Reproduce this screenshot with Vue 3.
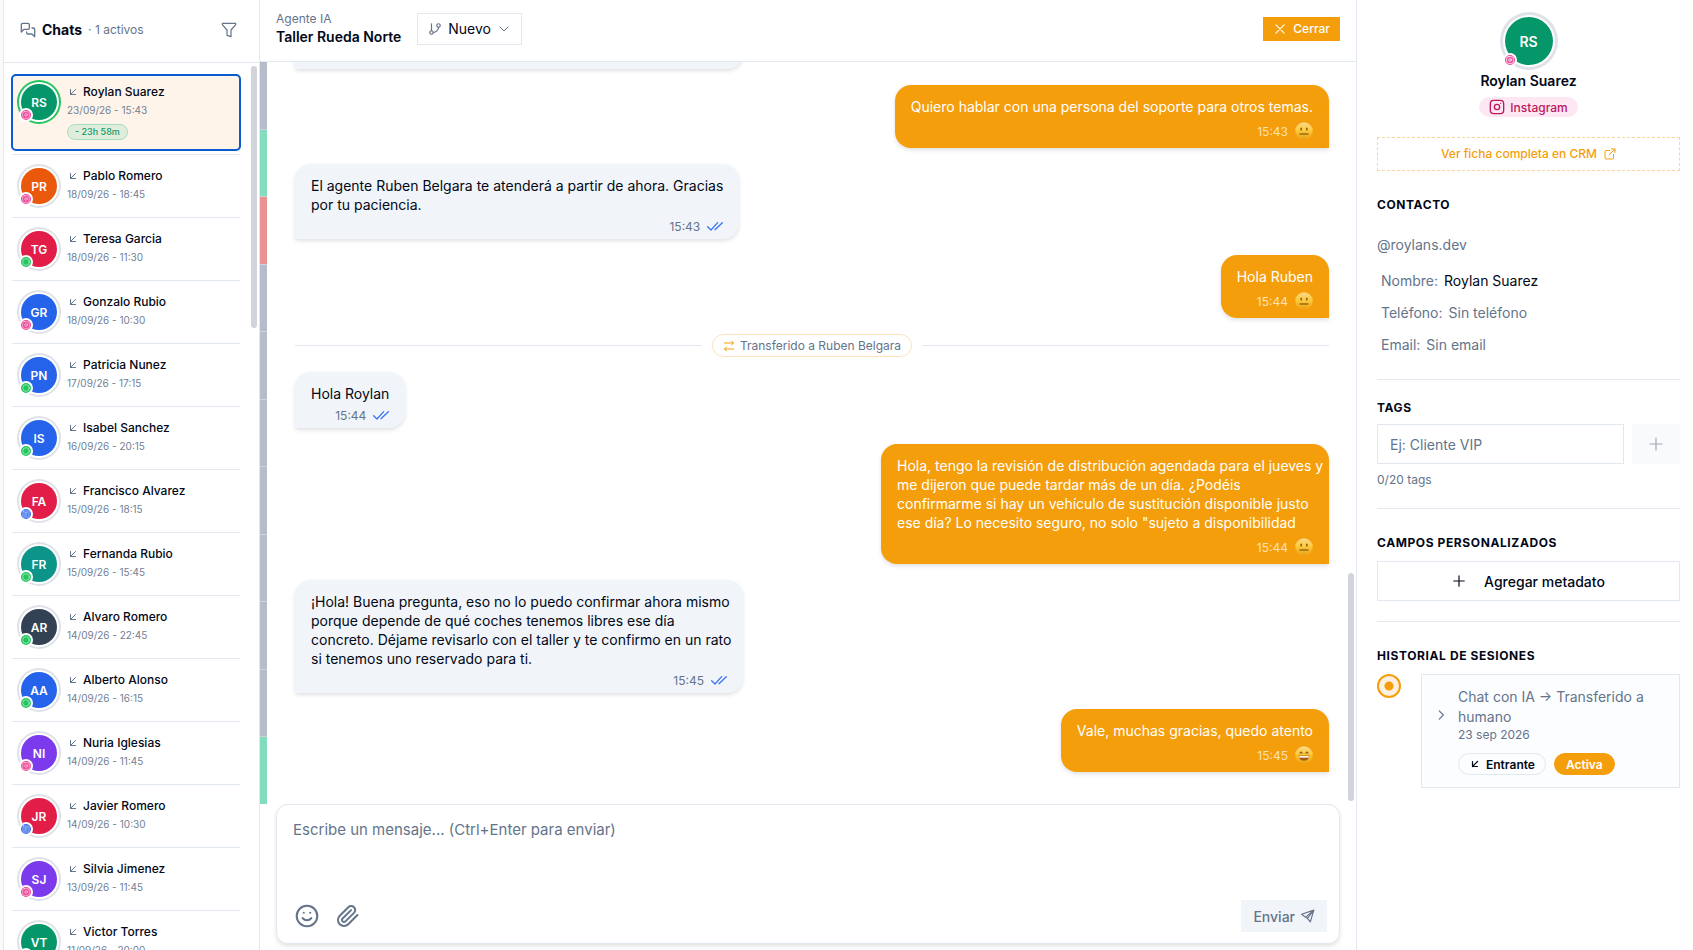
<template>
  <div class="app">
    <aside class="chats">
      <header class="chats-header">
        <Icon name="messages" :size="16" />
        <h1>Chats</h1>
        <span class="count">· 1 activos</span>
        <button type="button" class="icon-btn filter" aria-label="Filtrar">
          <Icon name="filter" :size="16" :stroke="1.8" />
        </button>
      </header>

      <ul class="chat-list">
        <li v-for="chat in chats" :key="chat.name">
          <button
            type="button"
            class="chat"
            :class="{ active: chat.name === selected }"
            @click="selected = chat.name"
          >
            <span class="avatar" :class="[chat.color, { online: chat.left }]">
              {{ chat.initials }}
              <span class="channel" :class="chat.channel">
                <Icon :name="chat.channel" :size="8" :stroke="2" />
              </span>
            </span>
            <span class="chat-info">
              <span class="chat-name">
                <Icon name="arrowIn" :size="12" />
                {{ chat.name }}
              </span>
              <span class="chat-date">{{ chat.date }}</span>
              <span v-if="chat.left" class="time-left">- {{ chat.left }}</span>
            </span>
          </button>
        </li>
      </ul>
      <div class="scrollbar list-bar"></div>
    </aside>

    <main class="conversation">
      <header class="conv-header">
        <div class="agent">
          <span>Agente IA</span>
          <strong>Taller Rueda Norte</strong>
        </div>
        <label class="status">
          <Icon name="branch" :size="14" />
          <select v-model="status" aria-label="Estado">
            <option>Nuevo</option>
          </select>
          <Icon name="chevronDown" :size="12" />
        </label>
        <button type="button" class="close-btn">
          <Icon name="close" :size="14" />
          Cerrar
        </button>
      </header>

      <div class="conv-body">
        <div class="mood">
          <span v-for="(m, i) in moods" :key="i" :class="m"></span>
        </div>

        <div class="messages">
          <div class="bubble agent-msg previous"></div>
          <template v-for="(msg, i) in messages" :key="i">
            <div v-if="msg.type === 'transfer'" class="transfer">
              <span class="transfer-pill">
                <Icon name="swap" :size="12" />
                {{ msg.text }}
              </span>
            </div>
            <div v-else class="bubble" :class="msg.type === 'agent' ? 'agent-msg' : 'client-msg'">
              <p>{{ msg.text }}</p>
              <div class="meta">
                <time>{{ msg.time }}</time>
                <Icon v-if="msg.type === 'agent'" name="checks" :size="16" />
                <svg v-else class="emoji" viewBox="0 0 18 18" width="18" height="18">
                  <defs>
                    <linearGradient :id="'face' + i" x1="0" y1="0" x2="0" y2="1">
                      <stop offset="0" stop-color="#fcd890" />
                      <stop offset="0.45" stop-color="#fccb3c" />
                      <stop offset="1" stop-color="#ee9f14" />
                    </linearGradient>
                  </defs>
                  <circle cx="9" cy="9" r="8.7" :fill="`url(#face${i})`" />
                  <template v-if="msg.mood === 'happy'">
                    <path d="M4.6 7.6 6.1 6l1.5 1.6M10.4 7.6 11.9 6l1.5 1.6" fill="none" stroke="#8d5a12" stroke-width="1.1" />
                    <path d="M3.6 9.6h10.8c0 3.2-2.3 5.2-5.4 5.2s-5.4-2-5.4-5.2z" fill="#a65a18" />
                    <path d="M4.1 10h9.8v1.7H4.1z" fill="#fff3dc" />
                  </template>
                  <template v-else>
                    <ellipse cx="6.2" cy="7" rx="0.9" ry="1.5" fill="#8d5a12" />
                    <ellipse cx="11.8" cy="7" rx="0.9" ry="1.5" fill="#8d5a12" />
                    <path d="M4.6 12h8.8" stroke="#8d5a12" stroke-width="1.3" />
                  </template>
                </svg>
              </div>
            </div>
          </template>
        </div>
        <div class="scrollbar conv-bar"></div>
      </div>

      <form class="composer" @submit.prevent="draft = ''">
        <textarea
          v-model="draft"
          aria-label="Mensaje"
          placeholder="Escribe un mensaje... (Ctrl+Enter para enviar)"
        ></textarea>
        <div class="composer-tools">
          <button type="button" class="icon-btn" aria-label="Emoji">
            <Icon name="smile" :size="26" :stroke="1.9" />
          </button>
          <button type="button" class="icon-btn" aria-label="Adjuntar">
            <Icon name="clip" :size="24" />
          </button>
          <button type="submit" class="send-btn">
            Enviar
            <Icon name="send" :size="14" />
          </button>
        </div>
      </form>
    </main>

    <aside class="details">
      <div class="profile">
        <span class="avatar large green">
          RS
          <span class="channel instagram">
            <Icon name="instagram" :size="8" :stroke="3" />
          </span>
        </span>
        <h2>Roylan Suarez</h2>
        <span class="network">
          <Icon name="instagram" :size="16" />
          Instagram
        </span>
      </div>

      <a href="#" class="crm-link">
        Ver ficha completa en CRM
        <Icon name="external" :size="12" />
      </a>

      <section class="contact">
        <h3>CONTACTO</h3>
        <p class="handle">@roylans.dev</p>
        <dl>
          <div><dt>Nombre:</dt><dd class="filled">Roylan Suarez</dd></div>
          <div><dt>Teléfono:</dt><dd>Sin teléfono</dd></div>
          <div><dt>Email:</dt><dd>Sin email</dd></div>
        </dl>
      </section>

      <section class="tags">
        <h3><label for="tag">TAGS</label></h3>
        <div class="tag-row">
          <input id="tag" v-model="tag" type="text" placeholder="Ej: Cliente VIP" />
          <button type="button" disabled aria-label="Agregar tag">
            <Icon name="plus" :size="16" :stroke="1.8" />
          </button>
        </div>
        <small>0/20 tags</small>
      </section>

      <section class="fields">
        <h3>CAMPOS PERSONALIZADOS</h3>
        <button type="button" class="add-field">
          <Icon name="plus" :size="14" :stroke="2" />
          Agregar metadato
        </button>
      </section>

      <section class="history">
        <h3>HISTORIAL DE SESIONES</h3>
        <div class="session">
          <span class="dot"></span>
          <article class="card">
            <div class="card-head">
              <Icon name="chevronRight" :size="14" />
              <div>
                <p>Chat con IA → Transferido a humano</p>
                <time>23 sep 2026</time>
              </div>
            </div>
            <div class="badges">
              <span class="badge"><Icon name="arrowIn" :size="12" :stroke="2.4" />Entrante</span>
              <span class="badge solid">Activa</span>
            </div>
          </article>
        </div>
      </section>
    </aside>
  </div>
</template>

<script setup>
import { h, ref } from "vue";

const icons = {
  messages:
    '<path d="M14 9a2 2 0 0 1-2 2H6l-4 4V4a2 2 0 0 1 2-2h8a2 2 0 0 1 2 2z"/><path d="M18 9h2a2 2 0 0 1 2 2v11l-4-4h-6a2 2 0 0 1-2-2v-1"/>',
  filter: '<path d="M22 2H2v2l7 8v8l6 2V12l7-8z"/>',
  arrowIn: '<path d="M17 7 7 17M17 17H7V7"/>',
  branch:
    '<path d="M6 3v12"/><circle cx="18" cy="6" r="3"/><circle cx="6" cy="18" r="3"/><path d="M18 9a9 9 0 0 1-9 9"/>',
  chevronDown: '<path d="m4 8 8 8 8-8"/>',
  chevronRight: '<path d="m9 19 7-7-7-7"/>',
  close: '<path d="M19 5 5 19M5 5l14 14"/>',
  checks: '<path d="M1 13l5 5L16 7M12 17.500 23 7"/>',
  swap: '<path d="m17 2 4 4-4 4M3 6h18M7 22l-4-4 4-4M21 18H3"/>',
  smile:
    '<circle cx="12" cy="12" r="9.500"/><path d="M8 14s1.500 2 4 2 4-2 4-2M9 9h.01M15 9h.01"/>',
  clip: '<path d="m21.440 11.050-9.190 9.190a6 6 0 0 1-8.490-8.490l8.570-8.570A4 4 0 1 1 18 8.840l-8.590 8.570a2 2 0 0 1-2.830-2.830l8.490-8.480"/>',
  send: '<path d="M22 2 1 9l7 5 14-12-6 20-5-6 11-14M8 14l3 2"/>',
  external:
    '<path d="M15 2h7v7M10 14 22 2M19 13v7a2 2 0 0 1-2 2H4a2 2 0 0 1-2-2V7a2 2 0 0 1 2-2h7"/>',
  plus: '<path d="M3 12h18M12 3v18"/>',
  instagram:
    '<rect x="2" y="2" width="20" height="20" rx="5"/><circle cx="12" cy="12" r="4"/><path d="M17.500 6.500h.01"/>',
  whatsapp: '<circle cx="12" cy="12" r="10"/>',
  web: '<rect x="3" y="3" width="18" height="18" rx="2"/><path d="M8 8h8M8 12h8M8 16h5"/>',
};

const Icon = (props) =>
  h("svg", {
    class: "icon",
    width: props.size,
    height: props.size,
    viewBox: "0 0 24 24",
    fill: "none",
    stroke: "currentColor",
    "stroke-width": props.stroke || 2,
    "stroke-linecap": "round",
    "stroke-linejoin": "round",
    "aria-hidden": "true",
    innerHTML: icons[props.name],
  });
Icon.props = ["name", "size", "stroke"];

const selected = ref("Roylan Suarez");
const status = ref("Nuevo");
const draft = ref("");
const tag = ref("");

const chats = [
  { initials: "RS", name: "Roylan Suarez", date: "23/09/26 - 15:43", color: "green", channel: "instagram", left: "23h 58m" },
  { initials: "PR", name: "Pablo Romero", date: "18/09/26 - 18:45", color: "orange", channel: "instagram" },
  { initials: "TG", name: "Teresa Garcia", date: "18/09/26 - 11:30", color: "red", channel: "whatsapp" },
  { initials: "GR", name: "Gonzalo Rubio", date: "18/09/26 - 10:30", color: "blue", channel: "instagram" },
  { initials: "PN", name: "Patricia Nunez", date: "17/09/26 - 17:15", color: "blue", channel: "whatsapp" },
  { initials: "IS", name: "Isabel Sanchez", date: "16/09/26 - 20:15", color: "blue", channel: "whatsapp" },
  { initials: "FA", name: "Francisco Alvarez", date: "15/09/26 - 18:15", color: "red", channel: "web" },
  { initials: "FR", name: "Fernanda Rubio", date: "15/09/26 - 15:45", color: "teal", channel: "whatsapp" },
  { initials: "AR", name: "Alvaro Romero", date: "14/09/26 - 22:45", color: "slate", channel: "whatsapp" },
  { initials: "AA", name: "Alberto Alonso", date: "14/09/26 - 16:15", color: "blue", channel: "whatsapp" },
  { initials: "NI", name: "Nuria Iglesias", date: "14/09/26 - 11:45", color: "violet", channel: "instagram" },
  { initials: "JR", name: "Javier Romero", date: "14/09/26 - 10:30", color: "red", channel: "web" },
  { initials: "SJ", name: "Silvia Jimenez", date: "13/09/26 - 11:45", color: "violet", channel: "instagram" },
  { initials: "VT", name: "Victor Torres", date: "11/09/26 - 20:00", color: "green", channel: "whatsapp" },
];

const moods = [
  "neutral", "good", "bad", "neutral", "neutral", "neutral",
  "neutral", "neutral", "neutral", "neutral", "good",
];

const messages = [
  { type: "client", text: "Quiero hablar con una persona del soporte para otros temas.", time: "15:43" },
  {
    type: "agent",
    text: "El agente Ruben Belgara te atenderá a partir de ahora. Gracias\npor tu paciencia.",
    time: "15:43",
  },
  { type: "client", text: "Hola Ruben", time: "15:44" },
  { type: "transfer", text: "Transferido a Ruben Belgara" },
  { type: "agent", text: "Hola Roylan", time: "15:44" },
  {
    type: "client",
    text: 'Hola, tengo la revisión de distribución agendada para el jueves y\nme dijeron que puede tardar más de un día. ¿Podéis\nconfirmarme si hay un vehículo de sustitución disponible justo\nese día? Lo necesito seguro, no solo "sujeto a disponibilidad',
    time: "15:44",
  },
  {
    type: "agent",
    text: "¡Hola! Buena pregunta, eso no lo puedo confirmar ahora mismo\nporque depende de qué coches tenemos libres ese día\nconcreto. Déjame revisarlo con el taller y te confirmo en un rato\nsi tenemos uno reservado para ti.",
    time: "15:45",
  },
  { type: "client", text: "Vale, muchas gracias, quedo atento", time: "15:45", mood: "happy" },
];
</script>

<style>
body {
  margin: 0;
  overflow: hidden;
}
</style>

<style scoped>
.app {
  display: flex;
  height: 100vh;
  box-sizing: border-box;
  padding-left: 3px;
  background: #fafafb;
  color: #020817;
  font-family: Inter, "Liberation Sans", sans-serif;
  font-size: 14px;
}

.app * {
  box-sizing: border-box;
}

button,
input,
select,
textarea {
  font: inherit;
  color: inherit;
  padding: 0;
  border: none;
  border-radius: 0;
  background: none;
}

button {
  cursor: pointer;
}

h1,
h2,
h3,
p,
ul,
dl,
dd {
  margin: 0;
  padding: 0;
}

.icon {
  flex-shrink: 0;
}

.icon-btn {
  display: flex;
  color: #64748b;
}

.scrollbar {
  position: absolute;
  width: 6px;
  border-radius: 3px;
  background: #d1d5db;
}

/* Chat list */
.chats {
  position: relative;
  display: flex;
  flex-direction: column;
  width: 257px;
  flex-shrink: 0;
  border-left: 1px solid #e2e8f0;
  border-right: 1px solid #e2e8f0;
  background: white;
}

.chats-header {
  display: flex;
  align-items: center;
  height: 63px;
  flex-shrink: 0;
  padding: 0 22px 3px 16px;
  border-bottom: 1px solid #e2e8f0;
  color: #64748b;
}

.chats-header h1 {
  margin: 0 6px;
  font-size: 14px;
  font-weight: 700;
  color: #020817;
}

.count {
  font-size: 12px;
}

.filter {
  margin-left: auto;
}

.chat-list {
  flex: 1;
  min-height: 0;
  overflow: hidden;
  padding: 8px 19px 0 8px;
  list-style: none;
}

.chat-list li {
  padding: 4px 0;
  border-bottom: 1px solid #e2e8f0;
}

.chat {
  display: flex;
  gap: 6px;
  width: 100%;
  padding: 5px;
  border-radius: 4px;
  text-align: left;
}

.chat.active {
  background: #fff4e9;
  outline: 2px solid #0a5bd0;
  outline-offset: -1px;
}

.avatar {
  position: relative;
  display: flex;
  align-items: center;
  justify-content: center;
  width: 36px;
  height: 36px;
  flex-shrink: 0;
  margin: 4px;
  border-radius: 50%;
  box-shadow: 0 0 0 2px white, 0 0 0 4px #dfe2e7;
  color: white;
  font-size: 12px;
  font-weight: 600;
}

.avatar.online {
  box-shadow: 0 0 0 2px white, 0 0 0 4px #22c55e;
}

.avatar.large {
  width: 48px;
  height: 48px;
  margin: 5px;
  box-shadow: 0 0 0 2px white, 0 0 0 5px #dfe2e7;
  font-size: 14px;
}

.green { background: #059669; }
.orange { background: #ea580c; }
.red { background: #e11d48; }
.blue { background: #2563eb; }
.teal { background: #0d9488; }
.slate { background: #334155; }
.violet { background: #7c3aed; }

.channel {
  position: absolute;
  left: -2px;
  bottom: -2px;
  display: flex;
  align-items: center;
  justify-content: center;
  width: 14px;
  height: 14px;
  border: 2px solid white;
  border-radius: 50%;
  color: rgba(255, 255, 255, 0.75);
}

.instagram { background: #ec4899; }
.whatsapp { background: #22c55e; }
.web { background: #3b6fea; }

.chat-info {
  display: flex;
  flex-direction: column;
  align-items: flex-start;
  padding: 3px 0 0;
}

.chat-name {
  display: flex;
  align-items: center;
  gap: 4px;
  font-size: 12px;
  line-height: 18px;
  font-weight: 500;
}

.chat-name .icon {
  color: #64748b;
}

.chat-date {
  font-size: 10px;
  line-height: 18px;
  color: #718096;
}

.time-left {
  margin: 5px 0;
  padding: 0 7px;
  border: 1px solid #a7dfc4;
  border-radius: 8px;
  background: #e0eddd;
  color: #109868;
  font-size: 9px;
  line-height: 14px;
  font-weight: 500;
}

.list-bar {
  top: 66px;
  right: 2px;
  height: 262px;
}

/* Conversation */
.conversation {
  display: flex;
  flex-direction: column;
  flex: 1;
  min-width: 0;
  background: white;
}

.conv-header {
  display: flex;
  align-items: center;
  height: 62px;
  flex-shrink: 0;
  padding: 0 16px 4px;
  border-bottom: 1px solid #e2e8f0;
}

.agent {
  display: flex;
  flex-direction: column;
  margin: 0 16px 2px 0;
  line-height: 18px;
}

.agent span {
  font-size: 12px;
  color: #64748b;
}

.agent strong {
  font-weight: 600;
}

.status {
  display: flex;
  align-items: center;
  gap: 6px;
  height: 32px;
  padding: 0 11px 0 10px;
  border: 1px solid #e2e8f0;
  color: #64748b;
}

.status select {
  appearance: none;
  width: 44px;
  color: #020817;
}

.close-btn {
  display: flex;
  align-items: center;
  gap: 6px;
  height: 24px;
  margin-left: auto;
  padding: 0 10px;
  background: #f59e0b;
  color: white;
  font-size: 12px;
  font-weight: 500;
}

.conv-body {
  position: relative;
  display: flex;
  flex: 1;
  min-height: 0;
}

.mood {
  display: flex;
  flex-direction: column;
  width: 7px;
}

.mood span {
  flex: 1;
  border-bottom: 1px solid #cdd2dc;
}

.mood span:last-child {
  border-bottom: none;
}

.neutral { background: #b6bdca; }
.good { background: #82dcbd; }
.bad { background: #ea9292; }

.messages {
  display: flex;
  flex-direction: column;
  justify-content: flex-end;
  align-items: flex-start;
  gap: 16px;
  flex: 1;
  min-width: 0;
  overflow: hidden;
  padding: 0 27px 32px 28px;
}

.bubble {
  flex-shrink: 0;
  max-width: 448px;
  padding: 12px 16px 5px;
  border-radius: 16px;
  box-shadow: 0 2px 4px rgba(0, 0, 0, 0.12);
  line-height: 19px;
}

.bubble p {
  white-space: pre;
}

.agent-msg {
  border-bottom-left-radius: 2px;
  background: #f1f5f9;
}

.client-msg {
  align-self: flex-end;
  border-bottom-right-radius: 0;
  background: #f59e0b;
  color: white;
}

.previous {
  width: 448px;
  height: 75px;
}

.meta {
  display: flex;
  align-items: center;
  justify-content: flex-end;
  gap: 7px;
  height: 24px;
  margin-top: 3px;
  font-size: 12px;
  color: rgba(255, 255, 255, 0.7);
}

.agent-msg .meta {
  height: 16px;
  margin-top: 4px;
  color: #64748b;
}

.agent-msg .icon {
  color: #3b74f6;
}

.transfer {
  display: flex;
  align-items: center;
  gap: 10px;
  width: 100%;
  margin-bottom: -1px;
}

.transfer::before,
.transfer::after {
  content: "";
  flex: 1;
  height: 1px;
  background: #e2e8f0;
}

.transfer-pill {
  display: flex;
  align-items: center;
  gap: 5px;
  height: 23px;
  padding: 0 10px;
  border: 1px solid #fde2bd;
  border-radius: 12px;
  color: #64748b;
  font-size: 12px;
}

.transfer-pill .icon {
  color: #f59e0b;
}

.conv-bar {
  right: 2px;
  bottom: 3px;
  height: 228px;
}

.composer {
  display: flex;
  flex-direction: column;
  height: 140px;
  flex-shrink: 0;
  margin: 0 16px 6px;
  padding: 13px 12px 11px;
  border: 1px solid #e2e8f0;
  border-radius: 12px;
  box-shadow: 0 2px 4px rgba(0, 0, 0, 0.12);
}

.composer textarea {
  flex: 1;
  padding: 0 4px;
  outline: none;
  resize: none;
  font-size: 15px;
  line-height: 24px;
}

.composer textarea::placeholder,
.tag-row input::placeholder {
  color: #64748b;
  opacity: 1;
}

.composer-tools {
  display: flex;
  align-items: center;
  gap: 16px;
  padding-left: 5px;
}

.send-btn {
  display: flex;
  align-items: center;
  gap: 6px;
  height: 32px;
  margin-left: auto;
  padding: 0 12px;
  background: #f1f5f9;
  color: #64748b;
  font-weight: 500;
}

/* Contact details */
.details {
  width: 337px;
  flex-shrink: 0;
  padding: 12px 13px 0 20px;
  border-left: 1px solid #e2e8f0;
  background: white;
}

.profile {
  display: flex;
  flex-direction: column;
  align-items: center;
}

.profile h2 {
  margin: 1px 0 6px;
  font-size: 14px;
  line-height: 20px;
  font-weight: 600;
}

.network {
  display: flex;
  align-items: center;
  gap: 5px;
  height: 20px;
  padding: 0 10px;
  border-radius: 10px;
  background: #fce7f3;
  color: #be185d;
  font-size: 12px;
  font-weight: 500;
}

.crm-link {
  display: flex;
  align-items: center;
  justify-content: center;
  gap: 7px;
  height: 34px;
  margin-top: 20px;
  padding-bottom: 1px;
  border: 1px dashed #fbd49b;
  color: #f59e0b;
  font-size: 12px;
  font-weight: 500;
  text-decoration: none;
}

.details section {
  border-bottom: 1px solid #e2e8f0;
}

.details .history {
  border-bottom: none;
}

h3 {
  font-size: 12px;
  line-height: 16px;
  font-weight: 700;
  letter-spacing: 0.05em;
}

.contact {
  padding: 26px 0 19px;
}

.handle {
  margin-top: 22px;
  line-height: 20px;
  color: #64748b;
}

.contact dl {
  margin: 9px 0 0 4px;
  color: #64748b;
}

.contact dl div {
  display: flex;
  align-items: center;
  gap: 6px;
  height: 32px;
}

.contact .filled {
  color: #020817;
}

.tags {
  padding: 20px 0;
}

.tag-row {
  display: flex;
  gap: 8px;
  height: 40px;
  margin-top: 8px;
}

.tag-row input {
  flex: 1;
  min-width: 0;
  padding: 0 12px;
  border: 1px solid #e2e8f0;
}

.tag-row button {
  display: flex;
  align-items: center;
  justify-content: center;
  width: 48px;
  background: #f8fafc;
  color: #a3a8b2;
}

.tags small {
  display: block;
  margin-top: 8px;
  font-size: 12px;
  line-height: 16px;
  color: #64748b;
}

.fields {
  padding: 26px 0 20px;
}

.add-field {
  display: flex;
  align-items: center;
  justify-content: center;
  gap: 18px;
  width: 100%;
  height: 40px;
  margin-top: 10px;
  border: 1px solid #e2e8f0;
  font-weight: 500;
}

.history {
  padding-top: 26px;
}

.session {
  display: flex;
  gap: 20px;
  margin-top: 10px;
}

.dot {
  width: 24px;
  height: 24px;
  flex-shrink: 0;
  border: 2px solid #f59e0b;
  border-radius: 50%;
  background: radial-gradient(circle, #f59e0b 4px, #fdf0e0 5px);
}

.card {
  flex: 1;
  padding: 12px;
  border: 1px solid #e2e8f0;
  background: #fcfdff;
  color: #64748b;
}

.card-head {
  display: flex;
  align-items: center;
  gap: 10px;
}

.card p {
  line-height: 20px;
}

.card time {
  display: block;
  font-size: 12px;
  line-height: 16px;
}

.badges {
  display: flex;
  gap: 8px;
  margin: 10px 0 0 24px;
}

.badge {
  display: flex;
  align-items: center;
  gap: 5px;
  height: 22px;
  padding: 0 10px;
  border: 1px solid #e2e8f0;
  border-radius: 11px;
  color: #020817;
  font-size: 12px;
  font-weight: 600;
}

.badge.solid {
  padding: 0 11px;
  border-color: #f59e0b;
  background: #f59e0b;
  color: white;
}
</style>
